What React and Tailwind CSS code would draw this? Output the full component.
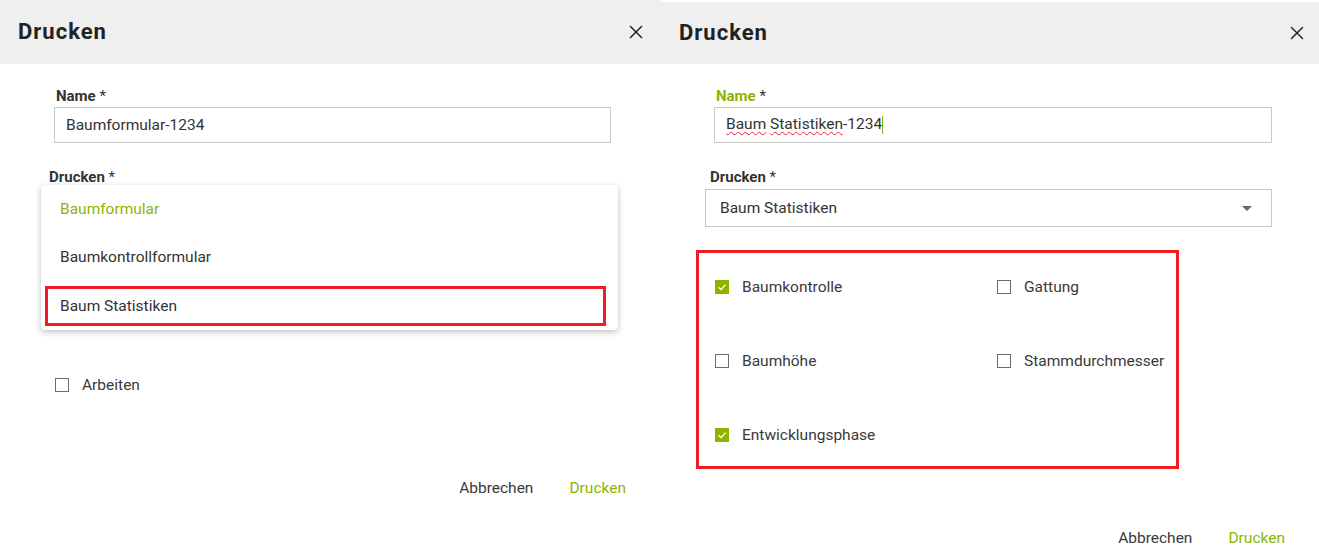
import { X } from "lucide-react";

const green = "text-[#8db500]";

const CloseButton = () => (
  <button className="text-[#222]">
    <X className="w-[22px] h-[22px]" strokeWidth={1.6} />
  </button>
);

const Checkbox = ({ checked }) =>
  checked ? (
    <span className="w-[14px] h-[14px] bg-[#8db500] flex items-center justify-center shrink-0">
      <svg viewBox="0 0 14 14" className="w-[14px] h-[14px]">
        <path d="M3.5 7.2 L6 9.6 L10.6 4.6" fill="none" stroke="#fff" strokeWidth="1.3" />
      </svg>
    </span>
  ) : (
    <span className="w-[14px] h-[14px] border border-[#6b6b6b] bg-white shrink-0" />
  );

const CheckItem = ({ label, checked }) => (
  <label className="flex items-center gap-[13px] h-[20px] text-[15.5px] text-[#3a3a3a]">
    <Checkbox checked={checked} />
    <span className="pt-[1px]">{label}</span>
  </label>
);

export default function App() {
  return (
    <div className="flex w-[1319px] h-[553px] bg-white overflow-hidden" style={{ fontFamily: "Roboto, 'Liberation Sans', sans-serif" }}>
      {/* linke Ansicht: Dropdown offen */}
      <div className="w-[661px] shrink-0 flex flex-col">
        <div className="h-[64px] bg-[#efefef] flex items-center justify-between pl-[18px] pr-[14px]">
          <h2 className="text-[22px] tracking-[1px] font-bold text-[#222] pb-[2px]">Drucken</h2>
          <CloseButton />
        </div>

        <div className="relative">
          <div className="pl-[54px] pr-[50px] pt-[22px]">
            <label className="block text-[15px] font-bold text-[#333] h-[20px] leading-[20px] pl-[2px]">
              Name <span className="font-normal">*</span>
            </label>
            <input
              type="text"
              defaultValue="Baumformular-1234"
              className="mt-[1px] w-full h-[36px] border border-[#c8c8c8] px-[11px] text-[15.5px] text-[#333] outline-none"
            />
          </div>

          <div className="pl-[49px] pt-[24px]">
            <label className="block text-[15px] font-bold text-[#333] h-[20px] leading-[20px]">
              Drucken <span className="font-normal">*</span>
            </label>
          </div>

          <div className="pl-[55px] pt-[188px]">
            <CheckItem label="Arbeiten" />
          </div>

          <div className="flex justify-end gap-[36px] pr-[35px] pt-[82px] text-[15.5px]">
            <button className="text-[#3a3a3a]">Abbrechen</button>
            <button className={green}>Drucken</button>
          </div>

          {/* offenes Auswahlmenü */}
          <div className="absolute left-[41px] top-[121px] w-[577px] bg-white rounded-[4px] shadow-[0_2px_6px_rgba(0,0,0,0.25)] text-[15.5px]">
            <div className={`h-[48px] flex items-center pl-[19px] pt-[2px] ${green}`}>Baumformular</div>
            <div className="h-[48px] flex items-center pl-[19px] pt-[2px] text-[#333]">Baumkontrollformular</div>
            <div className="mt-[5px] ml-[4px] mr-[12px] h-[40px] border-[3px] border-[#ee1c25] flex items-center pl-[12px] pt-[2px] text-[#333] mb-[4px]">
              Baum Statistiken
            </div>
          </div>
        </div>
      </div>

      {/* rechte Ansicht: Baum Statistiken gewählt */}
      <div className="flex-1 flex flex-col pt-[2px]">
        <div className="h-[62px] bg-[#efefef] flex items-center justify-between pl-[18px] pr-[11px]">
          <h2 className="text-[22px] tracking-[1px] font-bold text-[#222] pb-[2px]">Drucken</h2>
          <CloseButton />
        </div>

        <div className="pl-[53px] pr-[47px] pt-[22px]">
          <label className="block text-[15px] font-bold h-[20px] leading-[20px] pl-[2px]">
            <span className={green}>Name</span> <span className="font-normal text-[#333]">*</span>
          </label>
          <div className="mt-[1px] w-full h-[36px] border border-[#c8c8c8] px-[11px] text-[15.5px] text-[#333] flex items-center">
            <span className="underline decoration-wavy decoration-[#e23] decoration-1 underline-offset-2">Baum</span>
            <span>&nbsp;</span>
            <span className="underline decoration-wavy decoration-[#e23] decoration-1 underline-offset-2">Statistiken</span>
            <span>-1234</span>
            <span className="w-[1px] h-[18px] bg-[#8db500]" />
          </div>
        </div>

        <div className="pl-[44px] pr-[47px] pt-[24px]">
          <label className="block text-[15px] font-bold text-[#333] h-[20px] leading-[20px] pl-[5px]">
            Drucken <span className="font-normal">*</span>
          </label>
          <div className="mt-[2px] h-[38px] border border-[#c8c8c8] flex items-center justify-between pl-[14px] pr-[19px] text-[15.5px] text-[#333]">
            <span className="pt-[1px]">Baum Statistiken</span>
            <svg viewBox="0 0 10 5" className="w-[10px] h-[5px]">
              <path d="M0 0 L10 0 L5 5 Z" fill="#666" />
            </svg>
          </div>
        </div>

        <div className="ml-[35px] mt-[23px] w-[483px] h-[219px] border-[3px] border-[#ee1c25] pl-[16px] pt-[24px]">
          <div className="grid grid-cols-[282px_1fr] gap-y-[54px]">
            <CheckItem label="Baumkontrolle" checked />
            <CheckItem label="Gattung" />
            <CheckItem label="Baumhöhe" />
            <CheckItem label="Stammdurchmesser" />
            <CheckItem label="Entwicklungsphase" checked />
          </div>
        </div>

        <div className="flex justify-end gap-[36px] pr-[34px] pt-[58px] text-[15.5px]">
          <button className="text-[#3a3a3a]">Abbrechen</button>
          <button className={green}>Drucken</button>
        </div>
      </div>
    </div>
  );
}
